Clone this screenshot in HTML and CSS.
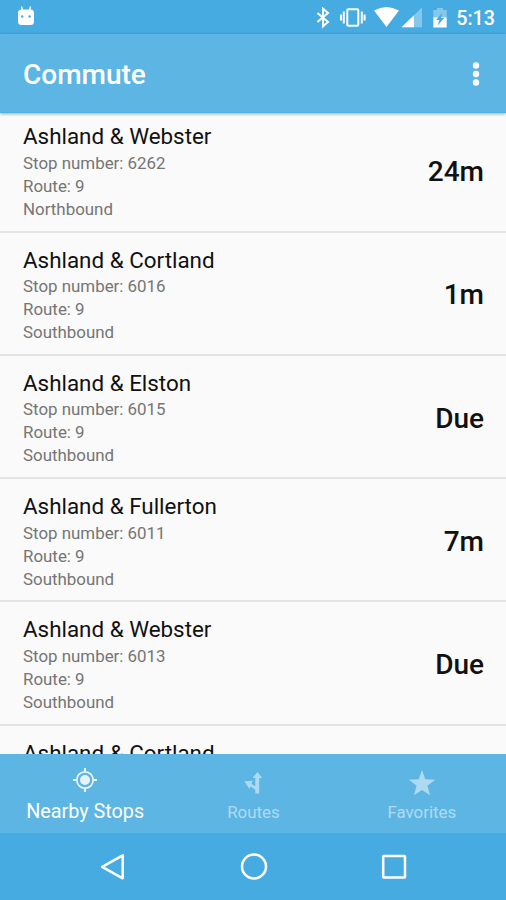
FILE: index.html
```html
<!DOCTYPE html>
<html lang="en">
<head>
    <meta charset="UTF-8">
    <meta name="viewport" content="width=device-width, initial-scale=1.0">
    <title>Commute</title>
    <link rel="stylesheet" href="styles.css">
</head>
<body>
    <div class="status-bar">
        <svg class="debug-icon" width="18" height="20" viewBox="0 0 18 20">
            <path d="M4.500 0.500l1 4M13.500 0.500l-1 4" stroke="#fff" stroke-width="1.500"/>
            <rect x="1" y="3.500" width="16" height="15.500" rx="3.500" fill="#fff"/>
            <circle cx="5.200" cy="10.500" r="1.200" fill="#46abe0"/>
            <circle cx="12.600" cy="10.500" r="1.200" fill="#46abe0"/>
        </svg>
        <svg class="status-icons" width="132" height="22" viewBox="315 7 132 22">
            <path d="M317.500 13l10.500 9-5 4.300V8.700l5 4.300-10.500 9" fill="none" stroke="#fff" stroke-width="2"/>
            <rect x="347.300" y="9.200" width="11" height="16.600" rx="1" fill="none" stroke="#fff" stroke-width="2"/>
            <path d="M343.800 11.500v12M341 14.500v6M361.800 11.500v12M364.600 14.500v6" stroke="#fff" stroke-width="2"/>
            <path d="M374 10.600q12.500-7 25 0L386.500 27z" fill="#fff"/>
            <path d="M401.500 27.200L422 7.500v19.700z" fill="#fff" opacity="0.350"/>
            <path d="M401.500 27.200L414 15.200v12z" fill="#fff"/>
            <path d="M433.300 10h3.700V8h6v2h3.700v8h-13.400z" fill="#fff" opacity="0.350"/>
            <path d="M433.300 17.500h13.400v10h-13.400z" fill="#fff"/>
            <path d="M442.500 12.500l-6.500 7.500h3.300l-1.500 5.500 6.300-7.500h-3.300z" fill="#46abe0"/>
        </svg>
        <span class="clock">5:13</span>
    </div>

    <div class="app-bar">
        <h1>Commute</h1>
        <svg width="8" height="26" viewBox="0 0 8 26" fill="#fff">
            <circle cx="4" cy="4.500" r="3.200"/>
            <circle cx="4" cy="13" r="3.200"/>
            <circle cx="4" cy="21.500" r="3.200"/>
        </svg>
    </div>

    <div class="list">
        <div class="stop">
            <div class="info">
                <h2>Ashland &amp; Webster</h2>
                <p>Stop number: 6262</p>
                <p>Route: 9</p>
                <p>Northbound</p>
            </div>
            <span class="time">24m</span>
        </div>
        <div class="stop">
            <div class="info">
                <h2>Ashland &amp; Cortland</h2>
                <p>Stop number: 6016</p>
                <p>Route: 9</p>
                <p>Southbound</p>
            </div>
            <span class="time">1m</span>
        </div>
        <div class="stop">
            <div class="info">
                <h2>Ashland &amp; Elston</h2>
                <p>Stop number: 6015</p>
                <p>Route: 9</p>
                <p>Southbound</p>
            </div>
            <span class="time">Due</span>
        </div>
        <div class="stop">
            <div class="info">
                <h2>Ashland &amp; Fullerton</h2>
                <p>Stop number: 6011</p>
                <p>Route: 9</p>
                <p>Southbound</p>
            </div>
            <span class="time">7m</span>
        </div>
        <div class="stop">
            <div class="info">
                <h2>Ashland &amp; Webster</h2>
                <p>Stop number: 6013</p>
                <p>Route: 9</p>
                <p>Southbound</p>
            </div>
            <span class="time">Due</span>
        </div>
        <div class="stop">
            <div class="info">
                <h2>Ashland &amp; Cortland</h2>
            </div>
        </div>
    </div>

    <div class="tabs">
        <div class="tab active">
            <svg width="26" height="26" viewBox="0 0 26 26">
                <circle cx="13" cy="13" r="8.200" fill="none" stroke="#fff" stroke-width="1.800"/>
                <circle cx="13" cy="13" r="5" fill="#fff"/>
                <path d="M13 1v4M13 21v4M1 13h4M21 13h4" stroke="#fff" stroke-width="2"/>
            </svg>
            <span>Nearby Stops</span>
        </div>
        <div class="tab">
            <svg width="26" height="26" viewBox="0 0 26 26">
                <path d="M17.500 2l4.700 6h-3V23.500h-3.900V19.800l-4.600-3.300-1.500 2.300L4.500 11.300l8.300-.6-1.500 3 4 2.800V8h-2.800z" fill="#fff"/>
            </svg>
            <span>Routes</span>
        </div>
        <div class="tab">
            <svg width="28" height="26" viewBox="0 0 28 26">
                <path d="M14 0l3.300 9.300 9.900.4-7.800 6.100 2.700 9.500L14 19.900l-8.100 5.400 2.700-9.500-7.800-6.100 9.900-.4z" fill="#fff"/>
            </svg>
            <span>Favorites</span>
        </div>
    </div>

    <div class="nav-bar">
        <svg width="28" height="28" viewBox="0 0 28 28">
            <path d="M23.700 2.300v23L3.200 13.800z"/>
        </svg>
        <svg width="28" height="28" viewBox="0 0 28 28">
            <circle cx="14" cy="13.500" r="12"/>
        </svg>
        <svg width="28" height="28" viewBox="0 0 28 28">
            <rect x="3.200" y="3" width="21.800" height="21.500" rx="0.500"/>
        </svg>
    </div>
</body>
</html>
```
FILE: styles.css
```css
* {
    box-sizing: border-box;
}
body {
    font-family: Roboto, sans-serif;
    margin: 0;
    height: 900px;
    display: flex;
    flex-direction: column;
    overflow: hidden;
    background: #fafafa;
    color: #111;
}
h1, h2, p {
    margin: 0;
}
svg {
    display: block;
    flex: none;
}
.status-bar {
    flex: none;
    height: 34px;
    padding: 0 11px 0 17px;
    display: flex;
    align-items: center;
    background: #46abe0;
    color: #fff;
}
.debug-icon {
    margin-bottom: 2px;
}
.status-icons {
    margin-left: auto;
    margin-top: 2px;
}
.clock {
    margin-left: 9px;
    margin-top: 2px;
    font-size: 19.7px;
    font-weight: 500;
}
.app-bar {
    flex: none;
    height: 79px;
    padding: 0 26px 0 23px;
    display: flex;
    align-items: center;
    justify-content: space-between;
    background: #5db5e3;
    color: #fff;
    border-bottom: 1px solid #4fb0e2;
    box-shadow: 0 1px 3px rgba(0, 0, 0, 0.35);
    z-index: 1;
}
.app-bar h1 {
    margin-top: 3px;
    font-size: 28px;
    font-weight: 500;
}
.app-bar svg {
    margin-top: 1px;
}
.list {
    flex: 1;
    min-height: 0;
    overflow: hidden;
}
.stop {
    height: 123.3px;
    padding: 12px 22px 0 23px;
    display: flex;
    justify-content: space-between;
    border-bottom: 2px solid #e4e4e4;
}
.stop:first-child {
    margin-top: -3.8px;
}
.info h2 {
    font-size: 22.4px;
    font-weight: 400;
    line-height: 30.5px;
}
.info p {
    font-size: 16.9px;
    line-height: 23px;
    color: #757575;
}
.time {
    padding-top: 33.8px;
    font-size: 28px;
    font-weight: 500;
    line-height: 33px;
}
.tabs {
    flex: none;
    height: 79px;
    display: flex;
    background: #5db5e3;
}
.tab {
    flex: 1;
    padding-top: 16px;
    display: flex;
    flex-direction: column;
    align-items: center;
    color: #fff;
    font-size: 16.9px;
    opacity: 0.5;
}
.tab span {
    margin-top: 6px;
    line-height: 20px;
}
.active {
    padding: 13px 0 0 1px;
    font-size: 19.8px;
    opacity: 1;
}
.active svg {
    opacity: 0.85;
}
.active span {
    margin-top: 7px;
    line-height: 24px;
}
.nav-bar {
    flex: none;
    height: 67px;
    padding-left: 1px;
    display: flex;
    align-items: center;
    justify-content: center;
    gap: 112.5px;
    background: #46abe0;
}
.nav-bar svg {
    fill: none;
    stroke: #fff;
    stroke-width: 2.5;
    stroke-linejoin: round;
}
```
